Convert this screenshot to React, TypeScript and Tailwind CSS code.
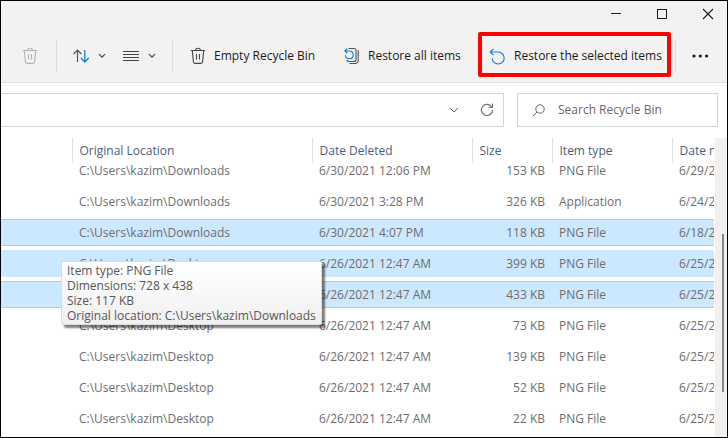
import React from "react";

const columns = [
  { title: "", width: "w-[71px]" },
  { title: "Original Location", width: "w-[240px]" },
  { title: "Date Deleted", width: "w-[160px]" },
  { title: "Size", width: "w-[80px]" },
  { title: "Item type", width: "w-[120px]" },
  { title: "Date modified", width: "" },
];

const files = [
  { location: "Downloads", deleted: "6/30/2021 12:06 PM", size: "153 KB", type: "PNG File", modified: "6/29/2021", state: "" },
  { location: "Downloads", deleted: "6/30/2021 3:28 PM", size: "326 KB", type: "Application", modified: "6/24/2021", state: "" },
  { location: "Downloads", deleted: "6/30/2021 4:07 PM", size: "118 KB", type: "PNG File", modified: "6/18/2021", state: "focused" },
  { location: "Desktop", deleted: "6/26/2021 12:47 AM", size: "399 KB", type: "PNG File", modified: "6/25/2021", state: "selected" },
  { location: "Desktop", deleted: "6/26/2021 12:47 AM", size: "433 KB", type: "PNG File", modified: "6/25/2021", state: "focused" },
  { location: "Desktop", deleted: "6/26/2021 12:47 AM", size: "73 KB", type: "PNG File", modified: "6/25/2021", state: "" },
  { location: "Desktop", deleted: "6/26/2021 12:47 AM", size: "139 KB", type: "PNG File", modified: "6/25/2021", state: "" },
  { location: "Desktop", deleted: "6/26/2021 12:47 AM", size: "52 KB", type: "PNG File", modified: "6/25/2021", state: "" },
  { location: "Desktop", deleted: "6/26/2021 12:47 AM", size: "22 KB", type: "PNG File", modified: "6/25/2021", state: "" },
];

const rowStyles: Record<string, string> = {
  "": "border-transparent",
  selected: "border-[#cce8ff] bg-[#cce8ff]",
  focused: "border-[#99d1ff] bg-[#cce8ff]",
};

const TrashIcon = () => (
  <svg width="16" height="18" viewBox="0 0 16 18" fill="none" stroke="currentColor" strokeWidth="1.1">
    <path d="M.8 3.5h14.4M5.5 3.3a2.5 2 0 0 1 5 0M2.3 3.5l1.1 11.3a1.7 1.7 0 0 0 1.7 1.6h5.8a1.7 1.7 0 0 0 1.7-1.6l1.1-11.3M6.5 7v5.5M9.5 7v5.5" />
  </svg>
);

const Chevron = () => (
  <svg width="8" height="8" viewBox="0 0 8 8" fill="none" stroke="currentColor" strokeWidth="1.2">
    <path d="M1 2.2l3 3 3-3" />
  </svg>
);

const Divider = () => <div className="h-8 w-px shrink-0 bg-[#dedddc]" />;

const App: React.FC = () => {
  return (
    <div className="flex min-h-screen flex-col overflow-hidden border border-black bg-white font-['Open_Sans','Segoe_UI',sans-serif] text-xs">
      <header className="border-b border-[#dfdedd] bg-[#f3f2f1] text-[#1b1b1b]">
        {/* Window buttons */}
        <div className="-mr-1 flex h-[25px] justify-end">
          <button aria-label="Minimize" className="flex w-[46px] items-center justify-center">
            <svg width="12" height="12" viewBox="0 0 12 12" stroke="currentColor">
              <path d="M1 5.5h10" />
            </svg>
          </button>
          <button aria-label="Maximize" className="flex w-[46px] items-center justify-center">
            <svg width="12" height="12" viewBox="0 0 12 12" fill="none" stroke="currentColor">
              <rect x="1.5" y="1.5" width="9" height="9" />
            </svg>
          </button>
          <button aria-label="Close" className="flex w-[46px] items-center justify-center">
            <svg width="12" height="12" viewBox="0 0 12 12" stroke="currentColor" strokeWidth="1.1">
              <path d="M1 1l10 10M11 1L1 11" />
            </svg>
          </button>
        </div>

        {/* Command bar */}
        <div className="flex h-14 items-center pt-1 whitespace-nowrap">
          <button aria-label="Delete" disabled className="ml-[21px] text-[#b4b3b2]">
            <TrashIcon />
          </button>
          <div className="ml-[18px]">
            <Divider />
          </div>
          <button aria-label="Sort" className="ml-4 flex items-center gap-2 text-[#444]">
            <svg width="17" height="14" viewBox="0 0 17 14" fill="none" strokeWidth="1.2">
              <path d="M4.5 13V1.2M.6 5l3.9-4 3.9 4" stroke="#555" />
              <path d="M11.8 1v11.8M7.9 9l3.9 4 3.9-4" stroke="#0078d4" />
            </svg>
            <Chevron />
          </button>
          <button aria-label="View" className="ml-4 flex items-center gap-2 text-[#444]">
            <svg width="18" height="12" viewBox="0 0 18 12" stroke="currentColor">
              <path d="M1 1.5h16M1 4.5h16M1 7.5h16M1 10.5h16" />
            </svg>
            <Chevron />
          </button>
          <div className="ml-4">
            <Divider />
          </div>
          <button className="ml-[17px] flex w-[154px] items-center gap-2">
            <span className="text-[#444]">
              <TrashIcon />
            </span>
            Empty Recycle Bin
          </button>
          <button className="flex w-[145px] items-center gap-2">
            <svg width="16" height="18" viewBox="0 0 16 18" fill="none" strokeWidth="1.1">
              <path d="M4.5 1.5H10a2 2 0 0 1 2 2v9a2 2 0 0 1-2 2H5a2 2 0 0 1-2-1.5M14.2 3v10.5a3 3 0 0 1-3 3H5.5" stroke="#555" />
              <path d="M3.2 1.6L.9 4l2.3 2.4M.9 4h4.4a3.9 3.9 0 1 1-3.9 4.3" stroke="#0078d4" />
            </svg>
            Restore all items
          </button>
          <button className="relative flex w-[186px] items-center gap-2">
            <svg width="17" height="17" viewBox="0 0 17 17" fill="none" stroke="#1b7fd4" strokeWidth="1.1">
              <path d="M4.6 .9L1.2 4l3.4 3.2M1.2 4H9.2a6 6 0 1 1-6 6.2" />
            </svg>
            Restore the selected items
            <span className="absolute -top-4 right-1 -left-[11px] h-[45px] rounded-xs border-4 border-[#fe0000]" />
          </button>
          <Divider />
          <button aria-label="See more" className="ml-4">
            <svg width="17" height="4" viewBox="0 0 17 4" fill="currentColor">
              <circle cx="2" cy="2" r="1.6" />
              <circle cx="8.3" cy="2" r="1.6" />
              <circle cx="14.6" cy="2" r="1.6" />
            </svg>
          </button>
        </div>
      </header>

      {/* Address and search */}
      <div className="flex gap-[13px] pt-[10px] pr-[9px] pb-[11px] text-[#666]">
        <div className="flex h-[34px] flex-1 items-center justify-end gap-5 border border-l-0 border-[#d4d4d4] pr-2">
          <button aria-label="Previous locations">
            <svg width="10" height="10" viewBox="0 0 10 10" fill="none" stroke="currentColor">
              <path d="M1 3l4 4 4-4" />
            </svg>
          </button>
          <button aria-label="Refresh">
            <svg width="16" height="16" viewBox="0 0 16 16" fill="none" stroke="currentColor" strokeWidth="1.1">
              <path d="M12.9 5.2A5.6 5.6 0 1 0 13.6 8M9.6 5.3h3.9V1.6" />
            </svg>
          </button>
        </div>
        <label className="flex h-[34px] w-[201px] items-center gap-[13px] border border-[#d4d4d4] pl-[14px]">
          <svg width="13" height="13" viewBox="0 0 13 13" fill="none" stroke="currentColor">
            <circle cx="8" cy="5" r="4.2" />
            <path d="M5 8L.8 12.2" />
          </svg>
          <input
            type="search"
            aria-label="Search Recycle Bin"
            placeholder="Search Recycle Bin"
            className="min-w-0 flex-1 outline-none placeholder:text-[#6a6a6a]"
          />
        </label>
      </div>

      {/* File list */}
      <div className="flex flex-1">
        <div className="relative min-w-0 flex-1 overflow-hidden">
          <table className="w-full table-fixed border-collapse text-left whitespace-nowrap text-[#6d6d6d]">
            <thead>
              <tr className="h-[25px] text-[#4c607a]">
                {columns.map((column, index) => (
                  <th
                    key={index}
                    className={`${column.width} ${index < 5 ? "border-r border-[#e0e0e0]" : ""} p-0 pl-[7px] font-normal`}
                  >
                    {column.title}
                  </th>
                ))}
              </tr>
            </thead>
            <tbody>
              {files.map((file, index) => {
                const cell =
                  index === 0
                    ? "h-[25px] leading-4"
                    : `mb-1 h-[27px] border-y leading-[26px] ${rowStyles[file.state]}`;
                return (
                  <tr key={index}>
                    <td className="p-0">
                      <div className={cell} />
                    </td>
                    <td className="p-0">
                      <div className={`${cell} pl-[7px]`}>C:\Users\kazim\{file.location}</div>
                    </td>
                    <td className="p-0">
                      <div className={`${cell} pl-[7px]`}>{file.deleted}</div>
                    </td>
                    <td className="p-0">
                      <div className={`${cell} pr-[7px] text-right`}>{file.size}</div>
                    </td>
                    <td className="p-0">
                      <div className={`${cell} pl-[7px]`}>{file.type}</div>
                    </td>
                    <td className="p-0">
                      <div className={`${cell} pl-[7px]`}>{file.modified}</div>
                    </td>
                  </tr>
                );
              })}
            </tbody>
          </table>

          <div
            role="tooltip"
            className="absolute top-[123px] left-[60px] rounded-xs border border-[#dcdcdc] bg-linear-to-b from-white to-[#f0f0f0] px-[5px] py-px leading-[15px] whitespace-nowrap text-[#575757] shadow-[3px_3px_2px_rgba(0,0,0,0.5)]"
          >
            <p>Item type: PNG File</p>
            <p>Dimensions: 728 x 438</p>
            <p>Size: 117 KB</p>
            <p>Original location: C:\Users\kazim\Downloads</p>
          </div>
        </div>
        <div className="ml-px w-3 bg-[#f1f0ef] pt-24 pl-[7px]">
          <div className="h-[158px] w-[2px] bg-[#858585]" />
        </div>
      </div>
    </div>
  );
};

export default App;
